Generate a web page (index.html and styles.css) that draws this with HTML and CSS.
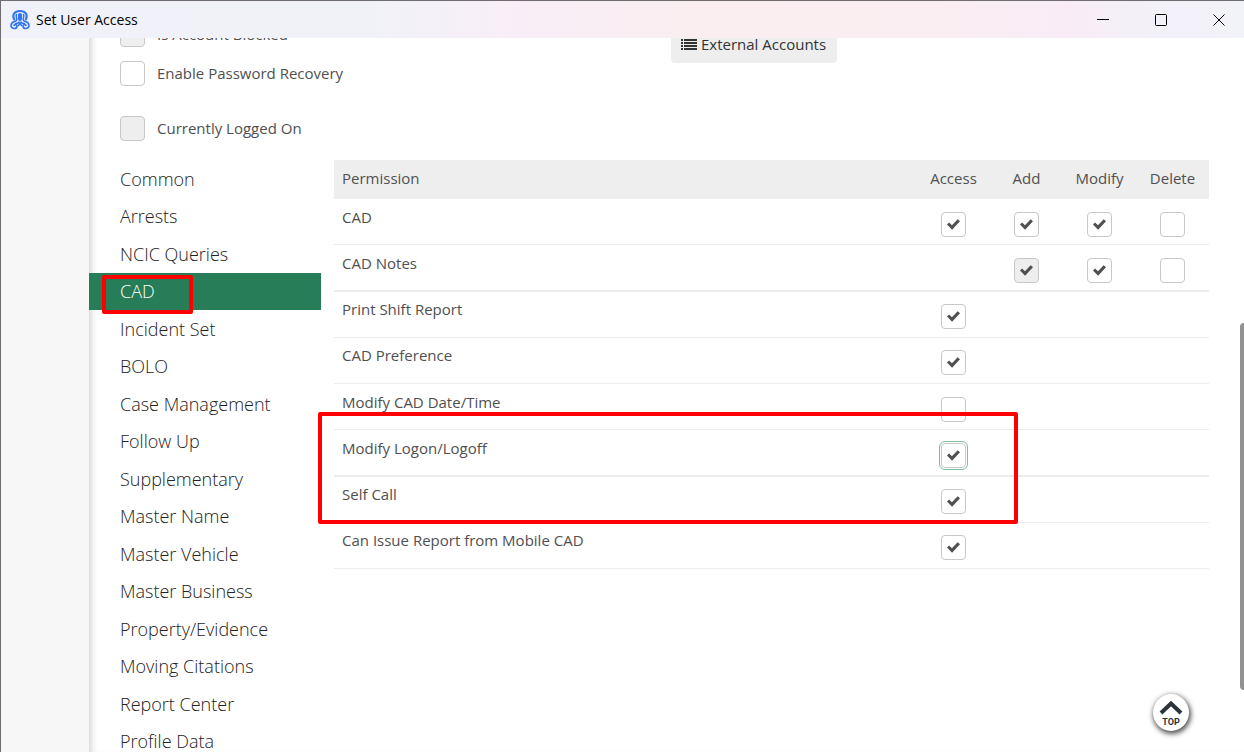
FILE: index.html
```html
<!DOCTYPE html>
<html lang="en">
<head>
<meta charset="utf-8">
<title>Set User Access</title>
<link rel="stylesheet" href="styles.css">
</head>
<body>
<div class="window">
  <header class="titlebar">
    <svg class="logo" viewBox="0 0 20 20" fill="none" stroke="#2f74f2" stroke-width="1.600" stroke-linecap="round" aria-hidden="true">
      <path d="M4.200 9.500C1.500 4.500 5 1 10 1s8.500 3.500 5.800 8.500" stroke-width="2"/>
      <path d="M10 5v4" stroke-width="4"/>
      <path d="M6.500 4.500C5 8 8.500 9 6 11c-2 1-5 1-5 4.500C1 19 6.500 19.500 7 16.500c.2-2-2.500-2.500-3-1M13.500 4.500C15 8 11.500 9 14 11c2 1 5 1 5 4.500 0 3.500-5.500 4-6 1-.2-2 2.500-2.500 3-1M9 12c-.5 1.500-2 1.500-3.500 1.500M11 12c.5 1.500 2 1.500 3.500 1.500M8.500 15.500l1.500-2 1.500 2"/>
    </svg>
    <h1 class="title">Set User Access</h1>
    <div class="controls">
      <button class="control" type="button" aria-label="Minimize"><svg viewBox="0 0 12 12"><path d="M0 5.500h12"/></svg></button>
      <button class="control" type="button" aria-label="Maximize"><svg viewBox="0 0 12 12"><rect x=".5" y=".5" width="11" height="11" rx="1"/></svg></button>
      <button class="control" type="button" aria-label="Close"><svg viewBox="0 0 12 12"><path d="M.5.5l11 11M11.500.5l-11 11"/></svg></button>
    </div>
  </header>
  <div class="body">
    <aside class="gutter"></aside>
    <main class="main">
      <section class="account">
        <div class="flags">
          <label class="flag"><input class="check" type="checkbox" disabled><span>Is Account Blocked</span></label>
          <label class="flag"><input class="check" type="checkbox"><span>Enable Password Recovery</span></label>
          <label class="flag flag-apart"><input class="check" type="checkbox" disabled><span>Currently Logged On</span></label>
        </div>
        <div>
          <button class="external" type="button">
            <svg class="list-icon" viewBox="0 0 16 14" aria-hidden="true"><path d="M0 1h2v2H0zM3 1h13v2H3zM0 4h2v2H0zM3 4h13v2H3zM0 7h2v2H0zM3 7h13v2H3zM0 10h2v2H0zM3 10h13v2H3z"/></svg>
            External Accounts
          </button>
        </div>
      </section>
      <section class="permissions">
        <nav class="modules">
          <a class="module" href="#">Common</a>
          <a class="module" href="#">Arrests</a>
          <a class="module" href="#">NCIC Queries</a>
          <a class="module active" href="#" aria-current="page">CAD<span class="mark mark-module"></span></a>
          <a class="module" href="#">Incident Set</a>
          <a class="module" href="#">BOLO</a>
          <a class="module" href="#">Case Management</a>
          <a class="module" href="#">Follow Up</a>
          <a class="module" href="#">Supplementary</a>
          <a class="module" href="#">Master Name</a>
          <a class="module" href="#">Master Vehicle</a>
          <a class="module" href="#">Master Business</a>
          <a class="module" href="#">Property/Evidence</a>
          <a class="module" href="#">Moving Citations</a>
          <a class="module" href="#">Report Center</a>
          <a class="module" href="#">Profile Data</a>
        </nav>
        <div class="grid-wrap">
          <table class="grid">
            <thead>
              <tr><th scope="col">Permission</th><th class="flag-col" scope="col">Access</th><th class="flag-col" scope="col">Add</th><th class="flag-col" scope="col">Modify</th><th class="flag-col" scope="col">Delete</th></tr>
            </thead>
            <tbody>
              <tr><td>CAD</td><td><input class="check" type="checkbox" aria-label="CAD access" checked></td><td><input class="check" type="checkbox" aria-label="CAD add" checked></td><td><input class="check" type="checkbox" aria-label="CAD modify" checked></td><td><input class="check" type="checkbox" aria-label="CAD delete"></td></tr>
              <tr class="group-end"><td>CAD Notes</td><td></td><td><input class="check" type="checkbox" aria-label="CAD Notes add" checked disabled></td><td><input class="check" type="checkbox" aria-label="CAD Notes modify" checked></td><td><input class="check" type="checkbox" aria-label="CAD Notes delete"></td></tr>
              <tr class="raised"><td>Print Shift Report</td><td><input class="check" type="checkbox" aria-label="Print Shift Report access" checked></td><td></td><td></td><td></td></tr>
              <tr class="raised"><td>CAD Preference</td><td><input class="check" type="checkbox" aria-label="CAD Preference access" checked></td><td></td><td></td><td></td></tr>
              <tr><td>Modify CAD Date/Time</td><td><input class="check" type="checkbox" aria-label="Modify CAD Date/Time access"></td><td></td><td></td><td></td></tr>
              <tr class="group-end"><td>Modify Logon/Logoff</td><td><input class="check focused" type="checkbox" aria-label="Modify Logon/Logoff access" checked></td><td></td><td></td><td></td></tr>
              <tr class="raised"><td>Self Call</td><td><input class="check" type="checkbox" aria-label="Self Call access" checked></td><td></td><td></td><td></td></tr>
              <tr class="raised"><td>Can Issue Report from Mobile CAD</td><td><input class="check" type="checkbox" aria-label="Can Issue Report from Mobile CAD access" checked></td><td></td><td></td><td></td></tr>
            </tbody>
          </table>
          <span class="mark mark-rows"></span>
        </div>
      </section>
    </main>
    <div class="thumb"></div>
    <button class="to-top" type="button">
      <svg viewBox="0 0 24 16" aria-hidden="true"><path d="M2 13.500L12 4l10 9.500"/></svg>
      <span>TOP</span>
    </button>
  </div>
</div>
</body>
</html>
```

FILE: styles.css
```css
* {
  box-sizing: border-box;
}

body {
  margin: 0;
  background: #fff;
  color: #505050;
  font: 15px/21px "Open Sans", "Noto Sans", sans-serif;
}

button {
  font: inherit;
  color: inherit;
  border: 0;
  padding: 0;
}

.window {
  display: flex;
  flex-direction: column;
  height: 100vh;
  overflow: hidden;
  border-top: 1px solid #706c70;
  border-left: 1px solid #706c70;
}

.titlebar {
  display: flex;
  align-items: center;
  flex: 0 0 37px;
  padding-left: 9px;
  background: linear-gradient(90deg, #f1f2f9 0%, #f1f2f8 30%, #f9eef7 42%, #faeef1 55%, #faeef2 75%, #f9ecf7 86%, #f3f0f8 91%, #f2f2f9 100%);
}

.logo {
  width: 20px;
  height: 20px;
}

.title {
  flex: 1;
  margin: 0 0 0 6px;
  color: #000;
  font-size: 14px;
  font-weight: 400;
}

.controls {
  display: flex;
  margin-right: -4px;
}

.control {
  display: grid;
  place-items: center;
  width: 58px;
  height: 36px;
  background: none;
}

.control svg {
  width: 12px;
  height: 12px;
  fill: none;
  stroke: #000;
}

.body {
  position: relative;
  display: flex;
  flex: 1;
  min-height: 0;
  overflow: hidden;
}

.gutter {
  flex: 0 0 88px;
  background: #f7f7f7;
}

.main {
  flex: 1;
  min-width: 0;
  margin-top: -16px;
  box-shadow: inset 7px 0 7px -5px #d0d0d0;
}

.account {
  display: grid;
  grid-template-columns: 1fr 1fr;
  gap: 13px;
  padding: 0 35px 0 31px;
}

.flags {
  display: flex;
  flex-direction: column;
  gap: 14px;
}

.flag {
  display: flex;
  align-items: center;
  gap: 12px;
}

.flag-apart {
  margin-top: 16px;
}

.check {
  appearance: none;
  display: grid;
  place-items: center;
  flex: none;
  width: 25px;
  height: 25px;
  margin: 0;
  border: 1px solid #c8c8c8;
  border-radius: 4px;
  background: #fff;
}

.check:disabled {
  background: #eee;
}

.check:checked::before {
  content: "";
  width: 13px;
  height: 11px;
  background: #505050;
  clip-path: polygon(0 49%, 16% 32%, 38% 57%, 82% 3%, 100% 20%, 39% 98%);
}

.focused {
  outline: 1px solid #7fbf9f;
  outline-offset: 1px;
}

.external {
  display: flex;
  align-items: center;
  gap: 4px;
  height: 37px;
  margin-top: 4px;
  padding: 0 11px 0 10px;
  border-radius: 4px;
  background: #eee;
  color: #333;
}

.list-icon {
  width: 16px;
  height: 14px;
  fill: #333;
}

.permissions {
  display: flex;
  gap: 13px;
  margin-top: 19px;
  padding-right: 35px;
}

.modules {
  flex: 0 0 232px;
  padding-top: 1px;
}

.module {
  position: relative;
  display: block;
  padding-left: 31px;
  color: #222;
  font-size: 18px;
  font-weight: 300;
  line-height: 37px;
  text-decoration: none;
}

.module:nth-child(even) {
  margin-bottom: 1px;
}

.active {
  background: #267d57;
  color: #fff;
}

.grid-wrap {
  position: relative;
  flex: 1;
}

.grid {
  width: 100%;
  border-collapse: separate;
  border-spacing: 0;
  table-layout: fixed;
}

.grid th {
  padding: 8px 8px 10px;
  background: #eee;
  font-weight: 400;
  text-align: left;
}

.grid .flag-col {
  width: 73px;
  padding: 8px 0 10px;
  text-align: center;
}

.grid td {
  padding: 8px;
  border-bottom: 1px solid #ececec;
  vertical-align: top;
}

.grid td + td {
  height: 46px;
  padding: 13px 24px 7px;
}

.grid .group-end td {
  border-bottom-width: 2px;
}

.grid .raised td {
  padding-top: 7px;
}

.grid .raised td + td {
  padding-top: 12px;
}

.mark {
  position: absolute;
  border: 4px solid #f00;
  border-radius: 2px;
}

.mark-module {
  left: 13px;
  top: 2px;
  z-index: 1;
  width: 91px;
  height: 39px;
}

.mark-rows {
  left: -16px;
  top: 252px;
  width: 700px;
  height: 112px;
}

.thumb {
  position: absolute;
  right: 0;
  top: 285px;
  width: 4px;
  height: 367px;
  border-radius: 4px 0 0 4px;
  background: #929292;
}

.to-top {
  position: absolute;
  right: 55px;
  bottom: 21px;
  display: flex;
  flex-direction: column;
  align-items: center;
  width: 36px;
  height: 37px;
  padding-top: 5px;
  border-radius: 50%;
  background: #fff;
  box-shadow: 1px 2px 5px 1px #555;
  color: #263238;
  font: 700 9px/10px Roboto, sans-serif;
}

.to-top svg {
  width: 24px;
  height: 17px;
  fill: none;
  stroke: #2b343b;
  stroke-width: 4;
}

.to-top span {
  padding-top: 1px;
}
```
